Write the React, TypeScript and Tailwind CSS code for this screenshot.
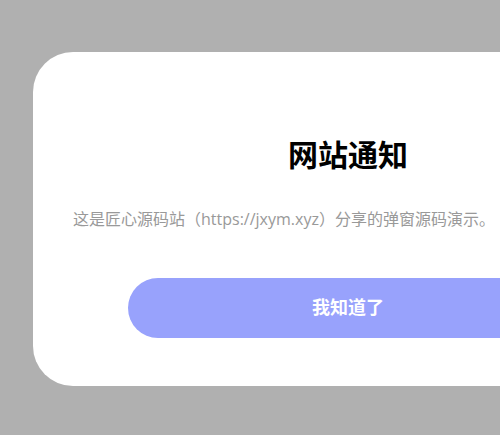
export default function App() {
  return (
    <div className="w-[500px] h-[435px] overflow-hidden bg-[#b0b0b0] pt-[52px] pl-[33px]" style={{ fontFamily: '"Liberation Sans", "Noto Sans CJK SC", sans-serif' }}>
      <div className="w-[630px] h-[334px] bg-white rounded-[40px] px-[40px] flex flex-col">
        <h1 className="mt-[84px] h-[40px] leading-[40px] text-center text-[30px] font-bold text-black">网站通知</h1>
        <p className="mt-[31px] h-[24px] leading-[24px] text-[16px] text-[#999999] whitespace-nowrap" style={{ fontFamily: '"Open Sans", "Noto Sans CJK SC", sans-serif' }}>这是匠心源码站（https://jxym.xyz）分享的弹窗源码演示。</p>
        <button className="mt-[47px] mx-auto w-[440px] h-[60px] rounded-full bg-[#98a2fc] text-white text-[18px] font-bold">我知道了</button>
      </div>
    </div>
  );
}
